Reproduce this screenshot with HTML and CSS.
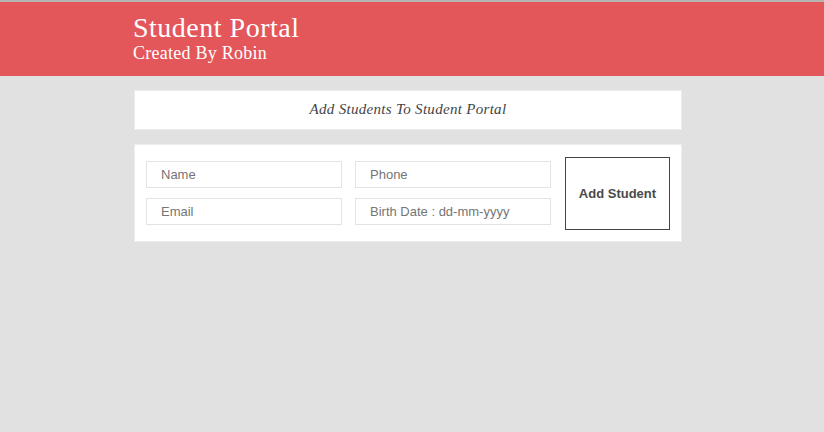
FILE: index.html
```html
<!DOCTYPE html>
<html>
<head>
<meta charset="utf-8">
<link rel="stylesheet" href="styles.css">
</head>
<body>
<header class="header">
  <div class="container">
    <h1 class="title">Student Portal</h1>
    <p class="subtitle">Created By Robin</p>
  </div>
</header>
<main class="container">
  <section class="card intro">
    <p class="intro-text">Add Students To Student Portal</p>
  </section>
  <section class="card form">
    <div class="fields">
      <input class="field" type="text" placeholder="Name">
      <input class="field" type="text" placeholder="Phone">
      <input class="field" type="text" placeholder="Email">
      <input class="field" type="text" placeholder="Birth Date : dd-mm-yyyy">
    </div>
    <button class="add-btn" type="button">Add Student</button>
  </section>
</main>
</body>
</html>
```
FILE: styles.css
```css
html, body {
  margin: 0;
  padding: 0;
}
body {
  background: #e1e1e1;
  border-top: 2px solid #b4b4b4;
  font-family: "Liberation Sans", Arial, sans-serif;
}
.container {
  width: 548px;
  margin-left: 134px;
}
.header {
  background: #e3575b;
  height: 74px;
  color: #fff;
}
.header .container {
  padding-top: 12px;
  margin-left: 133px;
}
.title {
  margin: 0;
  font-family: "Liberation Serif", serif;
  font-weight: normal;
  font-size: 28px;
  letter-spacing: 0.5px;
  line-height: 27px;
}
.subtitle {
  margin: 2px 0 0;
  font-family: "Liberation Serif", serif;
  font-size: 18px;
  letter-spacing: 0.25px;
  line-height: 20px;
}
.card {
  background: #fff;
  box-sizing: border-box;
  border: 1px solid #ececec;
}
.intro {
  margin-top: 14px;
  height: 40px;
  display: flex;
  align-items: center;
  justify-content: center;
  padding-bottom: 2px;
}
.intro-text {
  margin: 0;
  font-family: "Liberation Serif", serif;
  font-style: italic;
  font-size: 15px;
  letter-spacing: 0.3px;
  color: #444;
}
.form {
  margin-top: 14px;
  height: 98px;
  display: flex;
  align-items: center;
  padding: 0 11px;
  gap: 14px;
}
.fields {
  display: grid;
  grid-template-columns: 196px 196px;
  column-gap: 13px;
  row-gap: 10px;
}
.field {
  box-sizing: border-box;
  width: 196px;
  height: 27px;
  border: 1px solid #e3e3e3;
  padding: 0 14px;
  font-family: "Liberation Sans", Arial, sans-serif;
  font-size: 13px;
  color: #555;
  outline: none;
  margin: 0;
}
.field::placeholder {
  color: #757575;
}
.add-btn {
  box-sizing: border-box;
  width: 105px;
  height: 73px;
  background: #fff;
  border: 1px solid #444;
  font-family: "Liberation Sans", Arial, sans-serif;
  font-weight: bold;
  font-size: 13px;
  color: #4a4a4a;
  padding: 0;
  margin: 0;
}
```
